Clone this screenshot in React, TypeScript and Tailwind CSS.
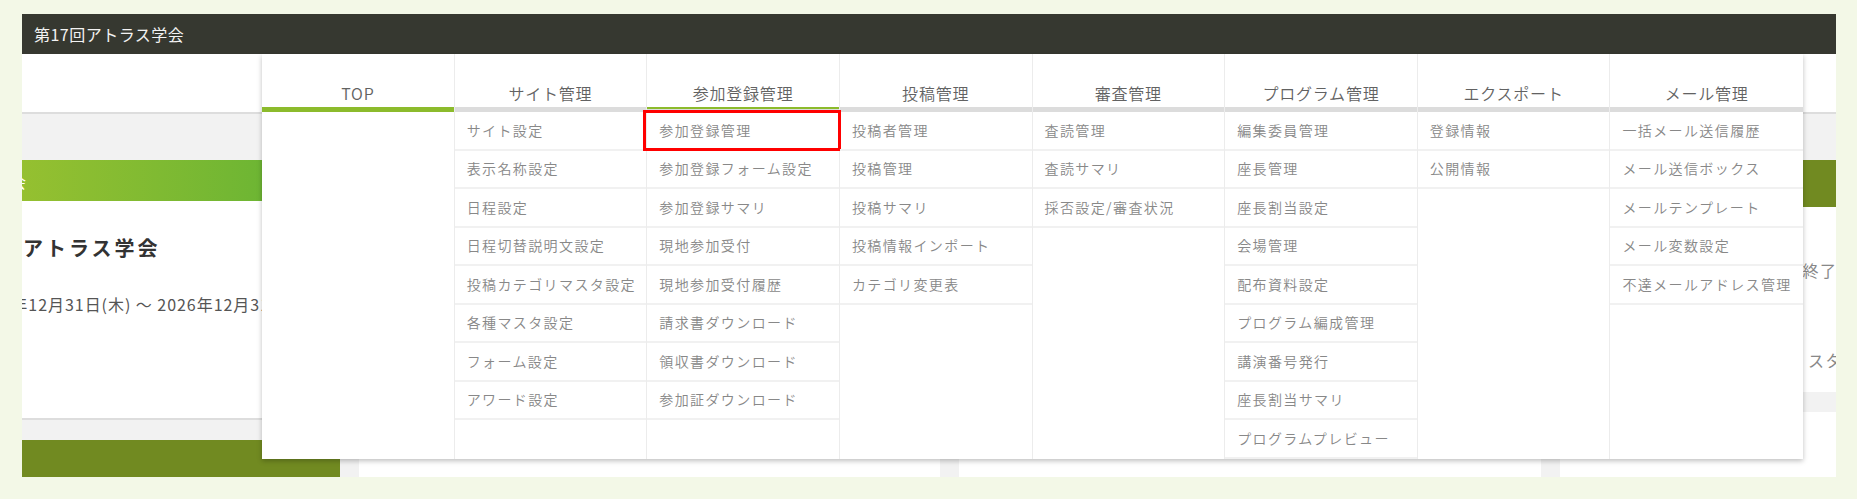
const menu = [
  { title: "TOP", items: [] as string[] },
  {
    title: "サイト管理",
    items: ["サイト設定", "表示名称設定", "日程設定", "日程切替説明文設定", "投稿カテゴリマスタ設定", "各種マスタ設定", "フォーム設定", "アワード設定"],
  },
  {
    title: "参加登録管理",
    items: ["参加登録管理", "参加登録フォーム設定", "参加登録サマリ", "現地参加受付", "現地参加受付履歴", "請求書ダウンロード", "領収書ダウンロード", "参加証ダウンロード"],
  },
  { title: "投稿管理", items: ["投稿者管理", "投稿管理", "投稿サマリ", "投稿情報インポート", "カテゴリ変更表"] },
  { title: "審査管理", items: ["査読管理", "査読サマリ", "採否設定/審査状況"] },
  {
    title: "プログラム管理",
    items: ["編集委員管理", "座長管理", "座長割当設定", "会場管理", "配布資料設定", "プログラム編成管理", "講演番号発行", "座長割当サマリ", "プログラムプレビュー"],
  },
  { title: "エクスポート", items: ["登録情報", "公開情報"] },
  { title: "メール管理", items: ["一括メール送信履歴", "メール送信ボックス", "メールテンプレート", "メール変数設定", "不達メールアドレス管理"] },
];

function MegaMenu() {
  return (
    <div className="absolute left-[240px] top-[40px] z-10 grid w-[1541px] grid-cols-8 bg-white shadow-[0_2px_5px_rgba(0,0,0,0.25)]">
      {menu.map((col, ci) => (
        <div key={col.title} className={ci < menu.length - 1 ? "border-r border-[#ececec]" : ""}>
          <div className="flex h-[53px] items-center justify-center pt-[25px] text-[16px] font-[350] tracking-[0.05em] text-[#626262]">
            {col.title}
          </div>
          {ci === 0 ? (
            <div className="h-[5px] bg-[#8cbb2c]" />
          ) : ci === 2 ? (
            <div className="h-[5px] border-t-2 border-[#8cbb2c] bg-[#dcdcdc]" />
          ) : (
            <div className="h-[5px] bg-[#dcdcdc]" />
          )}
          <ul>
            {col.items.map((item, ii) => (
              <li
                key={item}
                className="relative flex h-[38.5px] items-center border-b-2 border-[#f1f1f1] pl-[12px] text-[14px] font-[350] tracking-[0.1em] whitespace-nowrap text-[#888]"
              >
                {item}
                {ci === 2 && ii === 0 && (
                  <span className="absolute -top-[2px] -right-[2px] -bottom-[2px] -left-[4px] border-[3px] border-[#ff0000]" />
                )}
              </li>
            ))}
          </ul>
        </div>
      ))}
    </div>
  );
}

export default function App() {
  return (
    <div className="min-h-screen bg-[#f3f8e7] pt-[14px] pr-[21px] pb-[22px] pl-[22px] font-['Noto_Sans_CJK_JP','Noto_Sans',sans-serif]">
      <div className="relative h-[463px] overflow-hidden bg-[#f2f2f2]">
        <header className="flex h-[40px] items-center bg-[#363830] pl-[12px] text-[16px] tracking-[0.03em] text-[#f2f2f2]">
          第17回アトラス学会
        </header>
        <nav className="h-[60px] border-b-2 border-[#dddddd] bg-white" />

        <main className="flex gap-[19px] pt-[46px]">
          <div className="flex w-[318px] shrink-0 flex-col gap-[20px]">
            <div className="border-b-2 border-[#dddddd] bg-white">
              <div className="flex h-[41px] items-center overflow-hidden bg-gradient-to-r from-[#95c030] to-[#5fb234]">
                <span className="-ml-[28px] text-[16px] whitespace-nowrap text-white">学会</span>
              </div>
              <div className="h-[217px] pt-[33px] whitespace-nowrap">
                <p className="pl-[1px] text-[20px] leading-[28px] font-bold tracking-[0.15em] text-[#333]">アトラス学会</p>
                <p className="mt-[30px] -ml-[50px] text-[16px] leading-[24px] tracking-[0.06em] text-[#555]">
                  2025年12月31日(木) ～ 2026年12月31日(木)
                </p>
              </div>
            </div>
            <div className="h-[60px] bg-[#718a21]" />
          </div>

          <div className="w-[581px] shrink-0 pt-[252px]">
            <div className="h-[80px] bg-white" />
          </div>
          <div className="w-[582px] shrink-0 pt-[252px]">
            <div className="h-[80px] bg-white" />
          </div>

          <div className="flex flex-1 flex-col gap-[20px]">
            <div className="bg-white">
              <div className="h-[47px] bg-[#718a21]" />
              <div className="h-[185px] pt-[51px] text-[16px] leading-[24px] tracking-[0.1em] whitespace-nowrap text-[#888]">
                <p className="pl-[172px]">受付期間終了</p>
                <p className="mt-[66px] pl-[248px]">スタッフ</p>
              </div>
            </div>
            <div className="h-[80px] bg-white" />
          </div>
        </main>

        <MegaMenu />
      </div>
    </div>
  );
}
